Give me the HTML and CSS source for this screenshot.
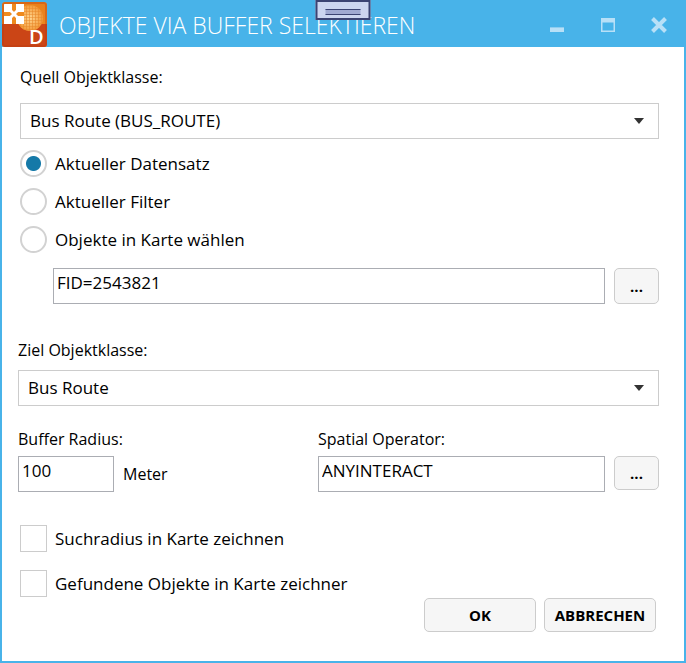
FILE: index.html
```html
<!DOCTYPE html>
<html lang="de">
<head>
    <meta charset="UTF-8">
    <meta name="viewport" content="width=device-width, initial-scale=1.0">
    <title>Objekte via Buffer selektieren</title>
    <link rel="stylesheet" href="styles.css">
</head>
<body>
    <div class="dialog">
        <header class="title-bar">
            <svg class="app-icon" viewBox="0 0 45 45" aria-hidden="true">
                <defs>
                    <linearGradient id="orange" x1="0" y1="0" x2="0" y2="1">
                        <stop offset="0" stop-color="#e8801c"/>
                        <stop offset="1" stop-color="#f08c1e"/>
                    </linearGradient>
                    <radialGradient id="globe">
                        <stop offset="0" stop-color="#ffd590"/>
                        <stop offset="1" stop-color="#f39a38"/>
                    </radialGradient>
                    <pattern id="grid" width="3" height="3" patternUnits="userSpaceOnUse">
                        <path d="M0 0H3M0 0V3" stroke="#e8882a" stroke-width="1.2"/>
                    </pattern>
                    <clipPath id="tile"><rect width="45" height="45" rx="3"/></clipPath>
                </defs>
                <g clip-path="url(#tile)">
                    <rect width="45" height="45" fill="url(#orange)"/>
                    <rect y="22" width="45" height="23" fill="#cb4516"/>
                    <circle cx="28" cy="16" r="13" fill="url(#globe)"/>
                    <circle cx="28" cy="16" r="13" fill="url(#grid)"/>
                    <rect x="2" y="2" width="20" height="20" fill="#ee8a1e"/>
                    <path d="M2 2h8v8H2zM14 2h8v8h-8zM2 14h8v8H2zM14 14h8v8h-8z" fill="#fff"/>
                    <path d="M8 8l8 8M16 8l-8 8" stroke="#fff" stroke-width="3"/>
                    <rect x="1" y="1" width="43" height="43" rx="2" fill="none" stroke="#b83a10" stroke-opacity=".35" stroke-width="2"/>
                </g>
                <text class="app-letter" x="27" y="42">D</text>
            </svg>
            <h1>OBJEKTE VIA BUFFER SELEKTIEREN</h1>
            <div class="window-buttons">
                <button type="button" aria-label="Minimieren">
                    <svg width="16" height="16"><path d="M1 10h14v1H1z" fill="#8dcdf0"/><path d="M1 11h14v4H1z" fill="#b8e0f7"/></svg>
                </button>
                <button type="button" aria-label="Maximieren">
                    <svg width="16" height="16"><path d="M1 1h14v14H1zM2.500 5.500v8h11v-8z" fill="#b8e0f7" fill-rule="evenodd"/></svg>
                </button>
                <button type="button" aria-label="Schließen">
                    <svg width="16" height="16"><path d="M1.500 1.500l13 13M14.500 1.500l-13 13" stroke="#b8e0f7" stroke-width="4"/></svg>
                </button>
            </div>
            <div class="grip"></div>
        </header>

        <form class="content">
            <div class="source">
                <label class="caption" for="sourceClass">Quell Objektklasse:</label>
                <div class="dropdown">
                    <select id="sourceClass">
                        <option>Bus Route (BUS_ROUTE)</option>
                    </select>
                </div>
                <div class="options">
                    <label class="option"><input type="radio" name="source" checked>Aktueller Datensatz</label>
                    <label class="option"><input type="radio" name="source">Aktueller Filter</label>
                    <label class="option"><input type="radio" name="source">Objekte in Karte wählen</label>
                </div>
                <div class="filter">
                    <input type="text" class="textbox" value="FID=2543821" aria-label="Filter">
                    <button type="button" class="button browse">...</button>
                </div>
            </div>

            <div class="target">
                <label class="caption" for="targetClass">Ziel Objektklasse:</label>
                <div class="dropdown">
                    <select id="targetClass">
                        <option>Bus Route</option>
                    </select>
                </div>
            </div>

            <div class="buffer">
                <div>
                    <label class="caption" for="radius">Buffer Radius:</label>
                    <div class="radius">
                        <input type="text" class="textbox" id="radius" value="100">
                        <span class="unit">Meter</span>
                    </div>
                </div>
                <div>
                    <label class="caption" for="operator">Spatial Operator:</label>
                    <div class="operator">
                        <input type="text" class="textbox" id="operator" value="ANYINTERACT">
                        <button type="button" class="button browse">...</button>
                    </div>
                </div>
            </div>

            <div class="checks">
                <label class="option"><input type="checkbox">Suchradius in Karte zeichnen</label>
                <label class="option"><input type="checkbox">Gefundene Objekte in Karte zeichner</label>
            </div>

            <div class="actions">
                <button type="submit" class="button">OK</button>
                <button type="button" class="button">ABBRECHEN</button>
            </div>
        </form>
    </div>
</body>
</html>
```
FILE: styles.css
```css
:root {
    --blue: #48b3e9;
    --line: #cccccc;
    --line-dark: #abadb3;
}

* {
    box-sizing: border-box;
}

body {
    margin: 0;
    font-family: 'Segoe UI', 'Open Sans', sans-serif;
    font-size: 17px;
    line-height: 24px;
    color: #000;
}

input, select, button {
    font: inherit;
    color: inherit;
    margin: 0;
}

.dialog {
    min-height: 100vh;
    border: 2px solid var(--blue);
    border-top: none;
    background: #fff;
}

/* Title bar */
.title-bar {
    position: relative;
    display: flex;
    align-items: center;
    height: 47px;
    padding-top: 2px;
    background: var(--blue);
    color: #fff;
}

.app-icon {
    width: 45px;
    height: 45px;
}

.app-letter {
    font-size: 20px;
    font-weight: 600;
    fill: #fff;
}

h1 {
    flex: 1;
    margin: 0 0 0 12px;
    font-size: 23px;
    font-weight: 300;
    line-height: 32px;
    white-space: nowrap;
}

.window-buttons {
    display: flex;
    gap: 35px;
    padding-right: 17px;
}

.window-buttons button {
    display: flex;
    padding: 0;
    border: none;
    background: none;
}

.grip {
    position: absolute;
    top: 0;
    left: 50%;
    width: 55px;
    height: 20px;
    transform: translateX(-50%);
    border: 2px solid #3b4373;
    background: #ccd5f0;
}

.grip::before {
    content: "";
    display: block;
    height: 4px;
    margin: 7px 8px;
    border: 1px solid #3b4373;
    border-width: 1px 0;
    background: #a0a9d2;
}

/* Form */
.content {
    padding: 18px 25px 29px 16px;
}

.caption {
    display: block;
    font-size: 16px;
}

.source {
    padding-left: 2px;
}

.source .caption {
    margin-bottom: 14px;
}

.dropdown {
    position: relative;
}

.dropdown::after {
    content: "";
    position: absolute;
    top: 15px;
    right: 15px;
    border: 5px solid transparent;
    border-top: 6px solid #333;
    border-bottom: none;
    pointer-events: none;
}

.dropdown select {
    display: block;
    width: 100%;
    height: 36px;
    padding: 0 30px 0 9px;
    border: 1px solid var(--line);
    border-radius: 0;
    background: #fff;
    appearance: none;
}

.options {
    display: grid;
    gap: 11px;
    padding-top: 11px;
}

.option {
    display: flex;
    align-items: center;
    gap: 8px;
}

.option input {
    width: 27px;
    height: 27px;
    border: 1px solid var(--line);
    background: #fff;
    appearance: none;
}

.option input[type="radio"] {
    border-width: 2px;
    border-color: #d2d2d2;
    border-radius: 50%;
}

.option input[type="radio"]:checked {
    background: radial-gradient(circle, #1579a8 7px, #fff 8px);
}

.textbox {
    min-width: 0;
    height: 36px;
    padding: 0 3px 8px;
    border: 1px solid var(--line-dark);
    border-radius: 0;
    background: #fff;
}

.button {
    height: 34px;
    padding: 0;
    border: 1px solid var(--line);
    border-radius: 5px;
    background: #f6f6f6;
    font-size: 15px;
    font-weight: 700;
}

.browse {
    width: 45px;
}

.filter, .operator {
    display: flex;
    gap: 9px;
}

.filter {
    padding: 15px 0 0 33px;
}

.filter .textbox, .operator .textbox {
    flex: 1;
}

.filter .browse {
    height: 36px;
}

.target {
    padding-top: 34px;
}

.target .caption {
    margin-bottom: 8px;
}

.buffer {
    display: grid;
    grid-template-columns: 300px 1fr;
    padding-top: 21px;
}

.buffer .caption {
    margin-bottom: 5px;
}

.radius {
    display: flex;
    align-items: center;
    gap: 9px;
}

.radius .textbox {
    width: 96px;
}

.unit {
    font-size: 16px;
}

.checks {
    display: grid;
    gap: 18px;
    padding: 33px 0 0 2px;
}

.actions {
    display: flex;
    justify-content: flex-end;
    gap: 8px;
    padding: 1px 3px 0 0;
}

.actions .button {
    width: 112px;
}
```
